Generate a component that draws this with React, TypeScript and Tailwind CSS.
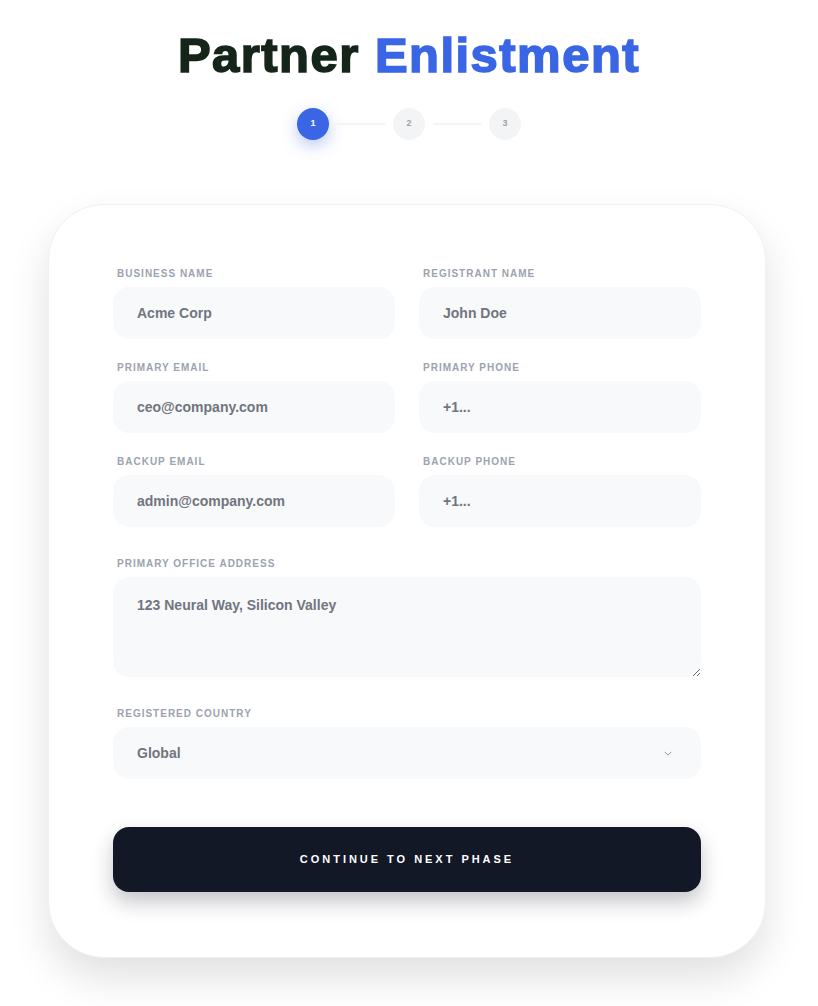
import React from "react";

const labelCls =
  "mb-2 ml-1 block text-[10px] font-bold uppercase leading-[10px] tracking-[0.1em] text-[#9ca3af]";
const fieldCls =
  "h-[52px] w-full rounded-2xl bg-[#f8f9fb] px-6 text-sm font-semibold text-[#71757e] outline-none placeholder:text-[#71757e]";

function Field({ label, placeholder }: { label: string; placeholder: string }) {
  return (
    <label className="block">
      <span className={labelCls}>{label}</span>
      <input placeholder={placeholder} className={fieldCls} />
    </label>
  );
}

function Stepper() {
  return (
    <div className="mt-6 flex items-center justify-center gap-2">
      <div className="flex h-8 w-8 items-center justify-center rounded-full bg-[#3a66e5] text-[9px] font-bold text-white shadow-[0_6px_16px_rgba(58,102,229,0.35)]">
        1
      </div>
      <div className="h-[2px] w-12 bg-[#f3f4f6]" />
      <div className="flex h-8 w-8 items-center justify-center rounded-full bg-[#f3f4f6] text-[9px] font-bold text-[#9ca3af]">
        2
      </div>
      <div className="h-[2px] w-12 bg-[#f3f4f6]" />
      <div className="flex h-8 w-8 items-center justify-center rounded-full bg-[#f3f4f6] text-[9px] font-bold text-[#9ca3af]">
        3
      </div>
    </div>
  );
}

export default function App() {
  return (
    <div
      className="min-h-screen bg-white pb-12"
      style={{ fontFamily: '"Liberation Sans", Arial, sans-serif' }}
    >
      <div className="pt-[26px] text-center">
        <h1 className="text-[49px] font-black leading-[58px] tracking-[0.03em] [-webkit-text-stroke:1.6px_currentColor]">
          <span className="text-[#15251a]">Partner</span>{" "}
          <span className="text-[#3a66e5]">Enlistment</span>
        </h1>
      </div>
      <Stepper />
      <div className="mx-auto mt-16 w-[718px] -translate-x-[2px] rounded-[56px] border border-[#f0f1f3] bg-white px-16 pt-16 pb-[65px] shadow-[0_20px_40px_rgba(0,0,0,0.12)]">
        <div className="grid grid-cols-2 gap-x-6 gap-y-6">
          <Field label="Business Name" placeholder="Acme Corp" />
          <Field label="Registrant Name" placeholder="John Doe" />
          <Field label="Primary Email" placeholder="ceo@company.com" />
          <Field label="Primary Phone" placeholder="+1..." />
          <Field label="Backup Email" placeholder="admin@company.com" />
          <Field label="Backup Phone" placeholder="+1..." />
        </div>

        <label className="mt-8 block">
          <span className={labelCls}>Primary Office Address</span>
          <textarea
            placeholder="123 Neural Way, Silicon Valley"
            className="block h-[100px] w-full rounded-2xl bg-[#f8f9fb] px-6 py-[18px] text-sm font-semibold text-[#71757e] outline-none placeholder:text-[#71757e]"
          />
        </label>

        <label className="mt-8 block">
          <span className={labelCls}>Registered Country</span>
          <div className="relative">
            <select className="h-[52px] w-full appearance-none rounded-2xl bg-[#f8f9fb] px-6 text-sm font-semibold text-[#71757e] outline-none">
              <option>Global</option>
            </select>
            <svg
              viewBox="0 0 10 6"
              className="pointer-events-none absolute right-[29px] top-[24px] h-[5px] w-[8px]"
              fill="none"
              stroke="#8b90a0"
              strokeWidth="1.2"
            >
              <path d="M1 1l4 4 4-4" />
            </svg>
          </div>
        </label>

        <button className="mt-12 h-[65px] w-full rounded-2xl bg-[#131826] text-[11px] font-bold uppercase tracking-[0.27em] text-white shadow-[0_10px_20px_rgba(19,24,38,0.25)]">
          Continue to Next Phase
        </button>
      </div>
    </div>
  );
}
